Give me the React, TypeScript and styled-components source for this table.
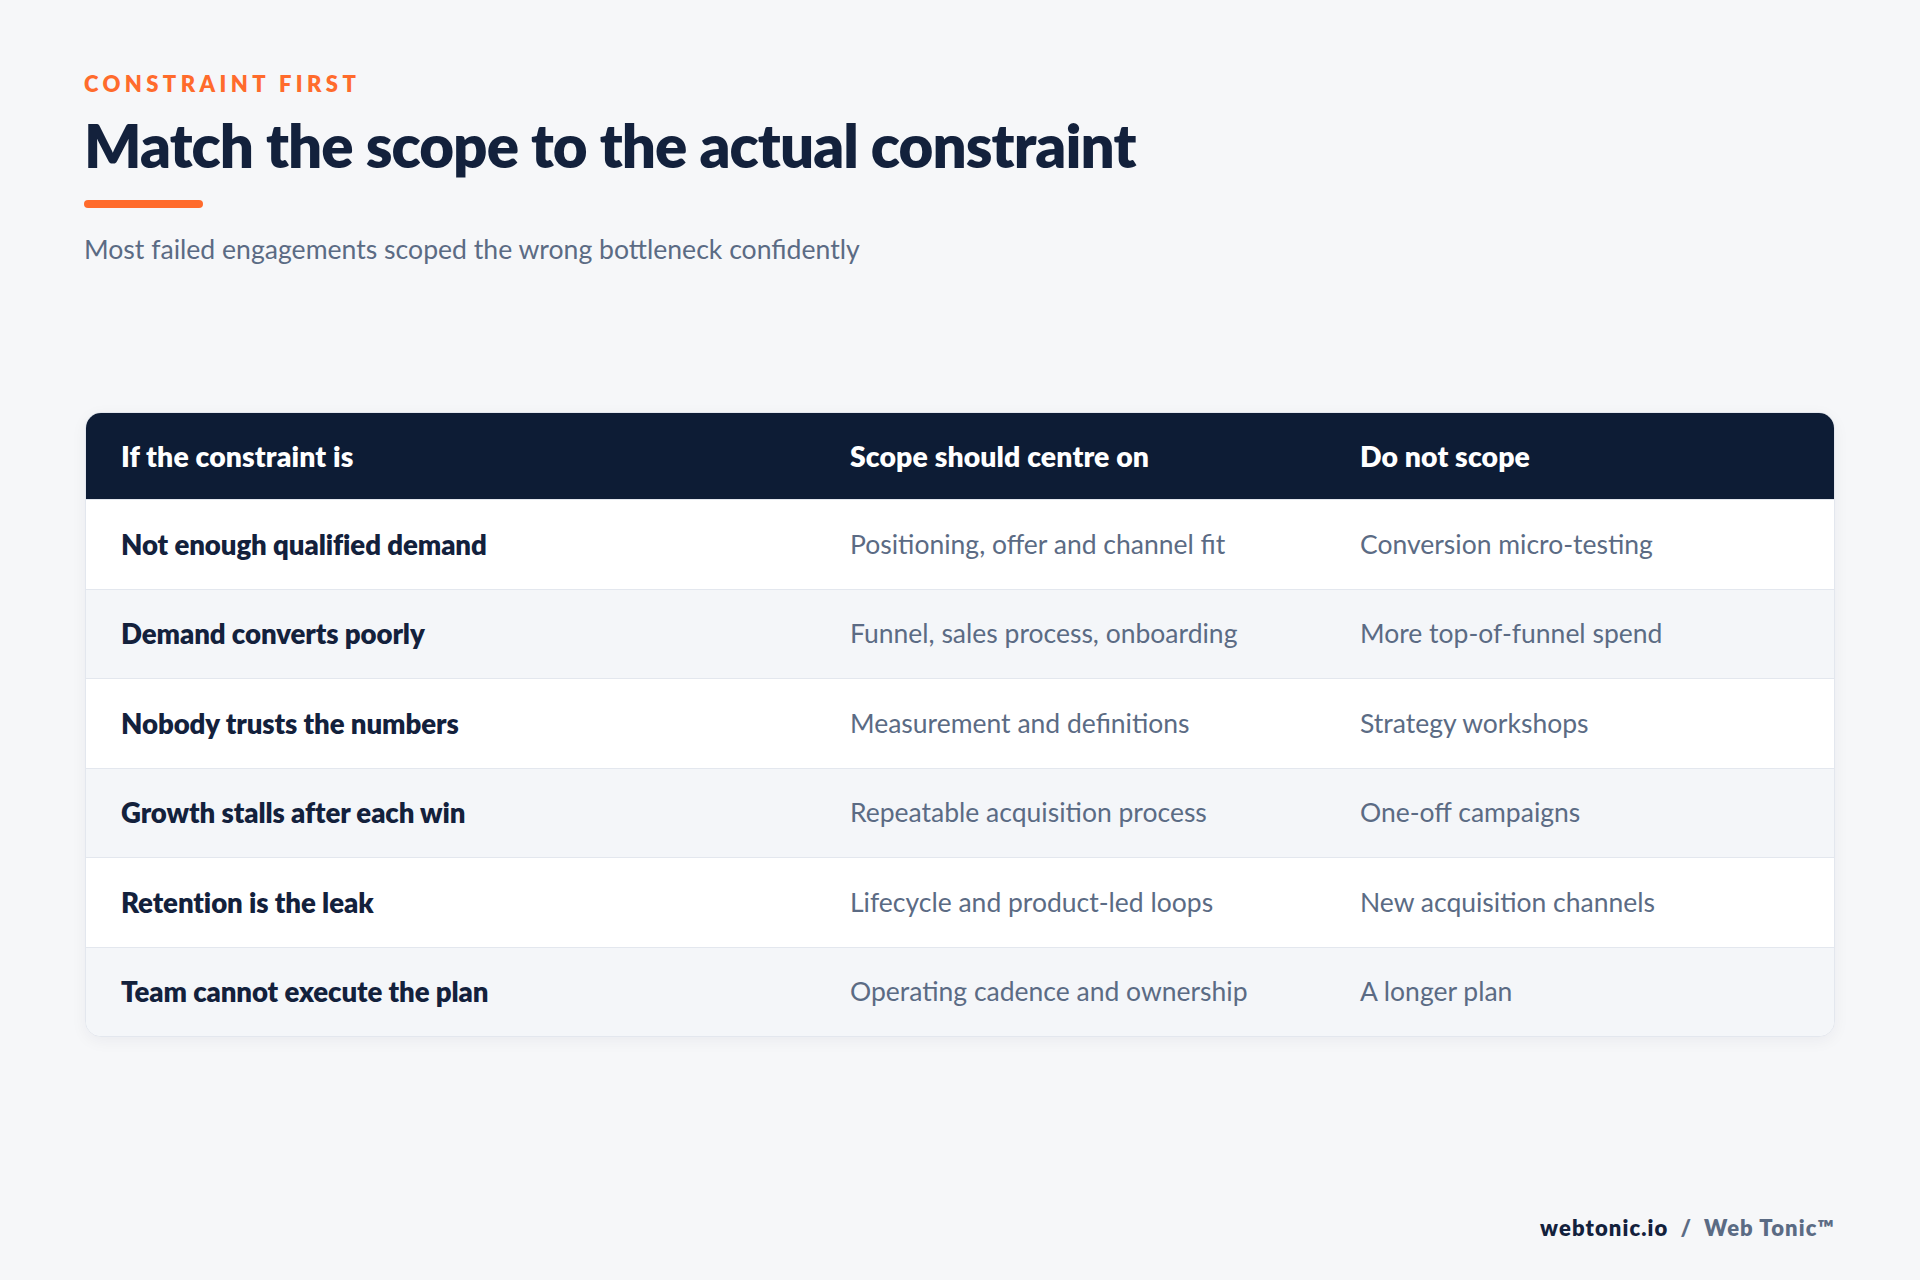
import React from "react";
import styled, { createGlobalStyle } from "styled-components";

const GlobalStyle = createGlobalStyle`
  html, body {
    margin: 0;
    padding: 0;
    background: #f6f7f9;
  }
  body {
    font-family: Lato, "Noto Sans", "Liberation Sans", sans-serif;
  }
  * { box-sizing: border-box; }
`;

const Page = styled.div`
  width: 1920px;
  min-height: 1280px;
  padding: 71px 85px 39px 84px;
  display: flex;
  flex-direction: column;
  background: #f6f7f9;
`;

const Eyebrow = styled.div`
  font-size: 22px;
  line-height: 1.2;
  font-weight: 800;
  letter-spacing: 0.2em;
  color: #ff6b2c;
  text-transform: uppercase;
`;

const Title = styled.h1`
  margin: 12px 0 0 0;
  font-size: 60px;
  line-height: 1.2;
  font-weight: 800;
  letter-spacing: -0.0155em;
  color: #13213c;
`;

const Accent = styled.div`
  margin-top: 19px;
  width: 119px;
  height: 8px;
  border-radius: 4px;
  background: #ff6b2c;
`;

const Subtitle = styled.p`
  margin: 26px 0 0 0;
  font-size: 26.6px;
  line-height: 1.2;
  font-weight: 400;
  color: #5b6b84;
`;

const Table = styled.div`
  margin: 146px 0 0 1px;
  border: 1px solid #e3e7ee;
  border-radius: 16px;
  overflow: hidden;
  background: #ffffff;
  box-shadow: 0 4px 16px rgba(15, 28, 53, 0.05);
`;

const Row = styled.div<{ $variant: "head" | "odd" | "even" }>`
  display: grid;
  grid-template-columns: 729px 510px 1fr;
  align-items: center;
  height: ${(p) => (p.$variant === "head" ? "86px" : "89.5px")};
  background: ${(p) =>
    p.$variant === "head" ? "#0d1c35" : p.$variant === "even" ? "#f4f6f9" : "#ffffff"};
  border-top: ${(p) => (p.$variant === "head" ? "none" : "1px solid #e3e7ee")};
`;

const Cell = styled.div<{ $kind: "head" | "label" | "body" }>`
  padding: 0 35px;
  font-size: ${(p) => (p.$kind === "head" ? "28.4px" : p.$kind === "label" ? "27.6px" : "26.5px")};
  line-height: 1.2;
  font-weight: ${(p) => (p.$kind === "body" ? 400 : 800)};
  color: ${(p) =>
    p.$kind === "head" ? "#ffffff" : p.$kind === "label" ? "#13213c" : "#5b6b84"};
  letter-spacing: ${(p) => (p.$kind === "head" ? "0.004em" : p.$kind === "label" ? "-0.003em" : "0")};
`;

const Footer = styled.div`
  margin-top: auto;
  display: flex;
  justify-content: flex-end;
  align-items: baseline;
  gap: 12px;
  font-size: 22px;
  line-height: 1.2;
  font-weight: 800;
  letter-spacing: 0.05em;
`;

const Brand = styled.span<{ $muted?: boolean }>`
  color: ${(p) => (p.$muted ? "#5b6b84" : "#13213c")};
`;

const rows: [string, string, string][] = [
  ["Not enough qualified demand", "Positioning, offer and channel fit", "Conversion micro-testing"],
  ["Demand converts poorly", "Funnel, sales process, onboarding", "More top-of-funnel spend"],
  ["Nobody trusts the numbers", "Measurement and definitions", "Strategy workshops"],
  ["Growth stalls after each win", "Repeatable acquisition process", "One-off campaigns"],
  ["Retention is the leak", "Lifecycle and product-led loops", "New acquisition channels"],
  ["Team cannot execute the plan", "Operating cadence and ownership", "A longer plan"],
];

export default function App() {
  return (
    <>
      <GlobalStyle />
      <Page>
        <Eyebrow>Constraint first</Eyebrow>
        <Title>Match the scope to the actual constraint</Title>
        <Accent />
        <Subtitle>Most failed engagements scoped the wrong bottleneck confidently</Subtitle>
        <Table>
          <Row $variant="head">
            <Cell $kind="head">If the constraint is</Cell>
            <Cell $kind="head">Scope should centre on</Cell>
            <Cell $kind="head">Do not scope</Cell>
          </Row>
          {rows.map((r, i) => (
            <Row key={r[0]} $variant={i % 2 === 0 ? "odd" : "even"}>
              <Cell $kind="label">{r[0]}</Cell>
              <Cell $kind="body">{r[1]}</Cell>
              <Cell $kind="body">{r[2]}</Cell>
            </Row>
          ))}
        </Table>
        <Footer>
          <Brand>webtonic.io</Brand>
          <Brand $muted>/</Brand>
          <Brand $muted>Web Tonic™</Brand>
        </Footer>
      </Page>
    </>
  );
}
